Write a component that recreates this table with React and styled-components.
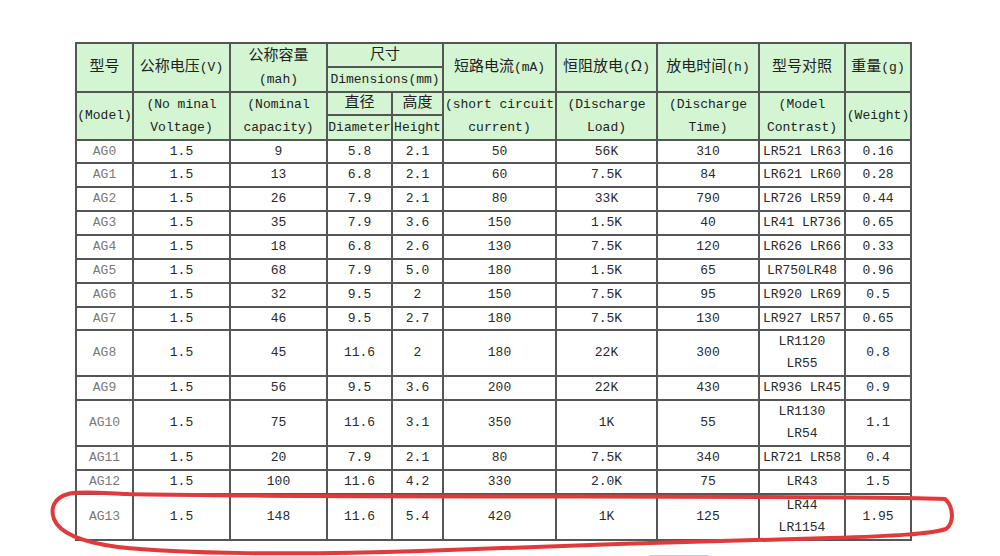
import React from 'react'
import styled, { createGlobalStyle } from 'styled-components'

const rows = [
  ['AG0', '1.5', '9', '5.8', '2.1', '50', '56K', '310', ['LR521 LR63'], '0.16'],
  ['AG1', '1.5', '13', '6.8', '2.1', '60', '7.5K', '84', ['LR621 LR60'], '0.28'],
  ['AG2', '1.5', '26', '7.9', '2.1', '80', '33K', '790', ['LR726 LR59'], '0.44'],
  ['AG3', '1.5', '35', '7.9', '3.6', '150', '1.5K', '40', ['LR41 LR736'], '0.65'],
  ['AG4', '1.5', '18', '6.8', '2.6', '130', '7.5K', '120', ['LR626 LR66'], '0.33'],
  ['AG5', '1.5', '68', '7.9', '5.0', '180', '1.5K', '65', ['LR750LR48'], '0.96'],
  ['AG6', '1.5', '32', '9.5', '2', '150', '7.5K', '95', ['LR920 LR69'], '0.5'],
  ['AG7', '1.5', '46', '9.5', '2.7', '180', '7.5K', '130', ['LR927 LR57'], '0.65'],
  ['AG8', '1.5', '45', '11.6', '2', '180', '22K', '300', ['LR1120', 'LR55'], '0.8'],
  ['AG9', '1.5', '56', '9.5', '3.6', '200', '22K', '430', ['LR936 LR45'], '0.9'],
  ['AG10', '1.5', '75', '11.6', '3.1', '350', '1K', '55', ['LR1130', 'LR54'], '1.1'],
  ['AG11', '1.5', '20', '7.9', '2.1', '80', '7.5K', '340', ['LR721 LR58'], '0.4'],
  ['AG12', '1.5', '100', '11.6', '4.2', '330', '2.0K', '75', ['LR43'], '1.5'],
  ['AG13', '1.5', '148', '11.6', '5.4', '420', '1K', '125', ['LR44', 'LR1154'], '1.95'],
]

const heights = [23, 24, 24, 24, 24, 24, 24, 23, 45, 24, 45, 24, 24, 46]
const colWidths = [57, 97, 97, 65, 51, 113, 101, 102, 86, 66]

const GlobalStyle = createGlobalStyle`
  body {
    margin: 0;
    background: #ffffff;
  }
`

const Page = styled.div`
  position: relative;
  width: 1000px;
  height: 556px;
  overflow: hidden;
  box-sizing: border-box;
  padding: 42px 0 0 75px;
  font-family: "Liberation Mono", "Noto Sans CJK SC", monospace;
`

const Table = styled.table`
  border-collapse: collapse;
  table-layout: fixed;
  width: 836px;
`

const Row = styled.tr`
  height: ${p => p.$h}px;
`

const Th = styled.th`
  border: 2px solid #555;
  background: #d4f5d2;
  padding: 0;
  font-weight: normal;
  font-size: 13px;
  line-height: ${p => (p.$tall ? 23 : 20)}px;
  color: #222;
  text-align: center;
  vertical-align: middle;
  white-space: nowrap;
`

const Td = styled.td`
  border: 2px solid #555;
  background: #fff;
  padding: 0;
  font-size: 13px;
  line-height: ${p => (p.$double ? 22 : 20)}px;
  color: ${p => (p.$muted ? '#7a7a7a' : '#2a2a2a')};
  text-align: center;
  vertical-align: middle;
  white-space: nowrap;
`

const Han = styled.span`
  font-family: "Noto Sans CJK SC", sans-serif;
  font-size: 15px;
  line-height: 1;
`

const Footer = styled.div`
  padding: 14px 0 0 573px;
`

const Button = styled.div`
  width: 60px;
  height: 24px;
  border: 1px solid #b9cbe0;
  border-radius: 3px;
  background: #f4f8fc;
`

const Mark = styled.svg`
  position: absolute;
  left: 0;
  top: 0;
  pointer-events: none;
`

function Cell({ lines, muted }) {
  return (
    <Td $muted={muted} $double={lines.length > 1}>
      {lines.map((l, i) => (
        <React.Fragment key={i}>
          {i > 0 && <br />}
          {l}
        </React.Fragment>
      ))}
    </Td>
  )
}

export default function App() {
  return (
    <Page>
      <GlobalStyle />
      <Table>
        <colgroup>
          {colWidths.map((w, i) => <col key={i} style={{ width: w }} />)}
        </colgroup>
        <thead>
          <Row $h={24}>
            <Th rowSpan={2}><Han>型号</Han></Th>
            <Th rowSpan={2}><Han>公称电压</Han>(V)</Th>
            <Th rowSpan={2} $tall><Han>公称容量</Han><br />(mah)</Th>
            <Th colSpan={2}><Han>尺寸</Han></Th>
            <Th rowSpan={2}><Han>短路电流</Han>(mA)</Th>
            <Th rowSpan={2}><Han>恒阻放电</Han>(<Han>Ω</Han>)</Th>
            <Th rowSpan={2}><Han>放电时间</Han>(h)</Th>
            <Th rowSpan={2}><Han>型号对照</Han></Th>
            <Th rowSpan={2}><Han>重量</Han>(g)</Th>
          </Row>
          <Row $h={25}>
            <Th colSpan={2}>Dimensions(mm)</Th>
          </Row>
          <Row $h={23}>
            <Th rowSpan={2}>(Model)</Th>
            <Th rowSpan={2} $tall>(No minal<br />Voltage)</Th>
            <Th rowSpan={2} $tall>(Nominal<br />capacity)</Th>
            <Th><Han>直径</Han></Th>
            <Th><Han>高度</Han></Th>
            <Th rowSpan={2} $tall>(short circuit<br />current)</Th>
            <Th rowSpan={2} $tall>(Discharge<br />Load)</Th>
            <Th rowSpan={2} $tall>(Discharge<br />Time)</Th>
            <Th rowSpan={2} $tall>(Model<br />Contrast)</Th>
            <Th rowSpan={2}>(Weight)</Th>
          </Row>
          <Row $h={25}>
            <Th>Diameter</Th>
            <Th>Height</Th>
          </Row>
        </thead>
        <tbody>
          {rows.map((r, i) => (
            <Row key={r[0]} $h={heights[i]}>
              {r.map((v, j) => (
                <Cell key={j} muted={j === 0} lines={Array.isArray(v) ? v : [v]} />
              ))}
            </Row>
          ))}
        </tbody>
      </Table>
      <Footer>
        <Button />
      </Footer>
      <Mark width="1000" height="556" viewBox="0 0 1000 556">
        <path
          d="M128 494 C 100 493, 80 491, 68 494 C 54 498, 50 508, 54 519 C 59 532, 80 542, 118 547 C 180 554, 300 555, 420 551 C 550 546, 700 541, 830 538 C 895 536, 930 534, 946 529 C 955 522, 953 506, 945 499 C 900 496, 600 497, 300 496 C 220 495, 160 495, 128 494"
          fill="none"
          stroke="#e23a3a"
          strokeWidth="4"
          strokeLinecap="round"
          strokeLinejoin="round"
        />
      </Mark>
    </Page>
  )
}
